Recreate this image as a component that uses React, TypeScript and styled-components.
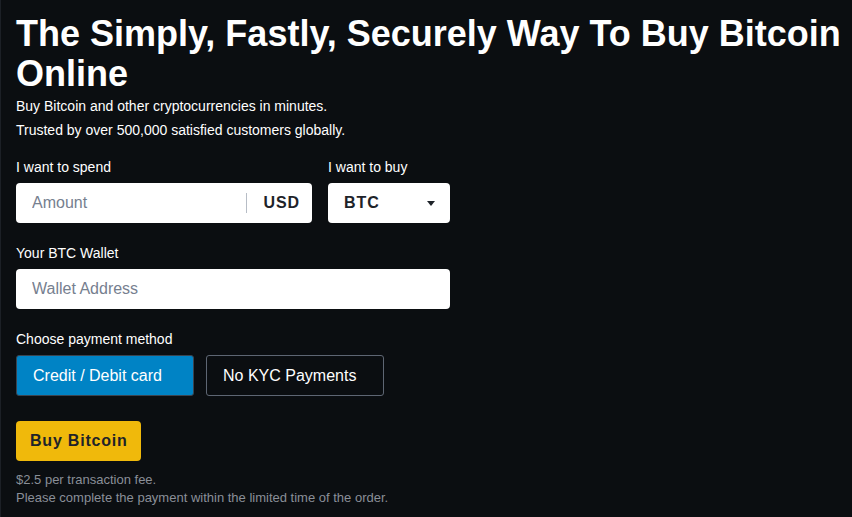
import React from 'react';
import styled, { createGlobalStyle } from 'styled-components';

const colors = {
  bg: '#0b0e11',
  white: '#ffffff',
  text: '#1e2329',
  placeholder: '#76808f',
  muted: '#8a8f98',
  blue: '#0083c5',
  yellow: '#f0b90b',
  line: '#5e6673',
};

const GlobalStyle = createGlobalStyle`
  html, body {
    margin: 0;
    padding: 0;
    background: ${colors.bg};
  }
  body {
    font-family: 'Liberation Sans', Arial, sans-serif;
  }
`;

const App = () => {
  return (
    <>
      <GlobalStyle />
      <Page>
        <Title>The Simply, Fastly, Securely Way To Buy Bitcoin Online</Title>
        <Lead>Buy Bitcoin and other cryptocurrencies in minutes.</Lead>
        <Lead>Trusted by over 500,000 satisfied customers globally.</Lead>

        <Row>
          <Field>
            <Label>I want to spend</Label>
            <InputBox width={296}>
              <Input placeholder="Amount" />
              <Divider />
              <Currency>USD</Currency>
            </InputBox>
          </Field>
          <Field>
            <Label>I want to buy</Label>
            <InputBox width={122}>
              <Currency grow>BTC</Currency>
              <Caret />
            </InputBox>
          </Field>
        </Row>

        <Field>
          <Label>Your BTC Wallet</Label>
          <InputBox width={434}>
            <Input placeholder="Wallet Address" />
          </InputBox>
        </Field>

        <Field>
          <Label>Choose payment method</Label>
          <Methods>
            <MethodButton active>Credit / Debit card</MethodButton>
            <MethodButton>No KYC Payments</MethodButton>
          </Methods>
        </Field>

        <BuyButton>Buy Bitcoin</BuyButton>
        <Notes>
          <Note>$2.5 per transaction fee.</Note>
          <Note>Please complete the payment within the limited time of the order.</Note>
        </Notes>
      </Page>
    </>
  );
};

export default App;

const Page = styled.main`
  min-height: 517px;
  box-sizing: border-box;
  padding: 14px 6px 0 15px;
  border-left: 1px solid #1c2026;
  color: ${colors.white};
`;

const Title = styled.h1`
  margin: 0;
  font-size: 36px;
  line-height: 40px;
  font-weight: 700;
`;

const Lead = styled.p`
  margin: 0;
  font-size: 14px;
  line-height: 24px;
`;

const Row = styled.div`
  display: flex;
  gap: 16px;
  margin-top: 15px;
`;

const Field = styled.div`
  display: flex;
  flex-direction: column;
  margin-bottom: 20px;
`;

const Label = styled.label`
  font-size: 14px;
  line-height: 20px;
  margin-bottom: 6px;
`;

const InputBox = styled.div<{ width: number }>`
  width: ${(p) => p.width}px;
  height: 40px;
  box-sizing: border-box;
  display: flex;
  align-items: center;
  padding: 0 12px 0 16px;
  background: ${colors.white};
  border-radius: 4px;
`;

const Input = styled.input`
  flex: 1;
  min-width: 0;
  border: none;
  outline: none;
  padding: 0;
  font-family: inherit;
  font-size: 16px;
  color: ${colors.text};
  background: transparent;

  &::placeholder {
    color: ${colors.placeholder};
  }
`;

const Divider = styled.span`
  width: 1px;
  height: 20px;
  background: #b7bdc6;
  margin: 0 17px 0 0;
`;

const Currency = styled.span<{ grow?: boolean }>`
  flex: ${(p) => (p.grow ? 1 : 'none')};
  font-size: 16px;
  font-weight: 700;
  color: ${colors.text};
  letter-spacing: 0.9px;
`;

const Caret = styled.span`
  width: 0;
  height: 0;
  border-left: 4px solid transparent;
  border-right: 4px solid transparent;
  border-top: 5px solid ${colors.text};
  margin-right: 3px;
`;

const Methods = styled.div`
  display: flex;
  gap: 12px;
`;

const MethodButton = styled.button<{ active?: boolean }>`
  width: 178px;
  height: 41px;
  padding: 0 0 0 16px;
  text-align: left;
  border-radius: 3px;
  border: 1px solid ${(p) => (p.active ? '#3a4450' : colors.line)};
  background: ${(p) => (p.active ? colors.blue : 'transparent')};
  color: ${colors.white};
  font-family: inherit;
  font-size: 16px;
  cursor: pointer;
`;

const BuyButton = styled.button`
  align-self: flex-start;
  height: 40px;
  margin-top: 5px;
  padding: 0 13px 0 14px;
  border: none;
  border-radius: 4px;
  background: ${colors.yellow};
  color: ${colors.text};
  font-family: inherit;
  font-size: 16px;
  font-weight: 700;
  letter-spacing: 0.8px;
  cursor: pointer;
`;

const Notes = styled.div`
  margin-top: 10px;
`;

const Note = styled.p`
  margin: 0;
  font-size: 13px;
  line-height: 18px;
  color: ${colors.muted};
`;
